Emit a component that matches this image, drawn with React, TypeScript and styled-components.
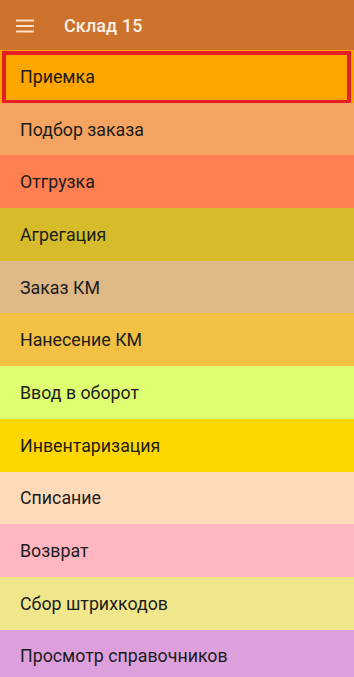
import React from "react";
import styled, { createGlobalStyle } from "styled-components";

const GlobalStyle = createGlobalStyle`
  html, body {
    margin: 0;
    padding: 0;
    background: #ffffff;
    font-family: Roboto, "Noto Sans", "Liberation Sans", sans-serif;
  }
`;

const menuItems = [
  { title: "Приемка", color: "#FFA500", active: true },
  { title: "Подбор заказа", color: "#F4A460" },
  { title: "Отгрузка", color: "#FF7F50" },
  { title: "Агрегация", color: "#D6BC2A" },
  { title: "Заказ КМ", color: "#DEB887" },
  { title: "Нанесение КМ", color: "#F2C043" },
  { title: "Ввод в оборот", color: "#DFFF72" },
  { title: "Инвентаризация", color: "#FFD700" },
  { title: "Списание", color: "#FFDAB9" },
  { title: "Возврат", color: "#FFB6C1" },
  { title: "Сбор штрихкодов", color: "#F0E68C" },
  { title: "Просмотр справочников", color: "#DDA0DD" },
];

function App() {
  return (
    <Screen>
      <GlobalStyle />
      <Toolbar>
        <MenuButton aria-label="menu">
          <svg width="18" height="14" viewBox="0 0 18 14">
            <rect x="0" y="0.5" width="18" height="2" rx="0.5" fill="currentColor" />
            <rect x="0" y="6" width="18" height="2" rx="0.5" fill="currentColor" />
            <rect x="0" y="11.5" width="18" height="2" rx="0.5" fill="currentColor" />
          </svg>
        </MenuButton>
        <Title>Склад 15</Title>
      </Toolbar>
      <MenuList>
        {menuItems.map((item) => (
          <MenuRow key={item.title} $bg={item.color} $active={item.active}>
            {item.title}
          </MenuRow>
        ))}
      </MenuList>
    </Screen>
  );
}

export default App;

const Screen = styled.div`
  width: 354px;
  height: 677px;
  overflow: hidden;
  display: flex;
  flex-direction: column;
`;

const Toolbar = styled.div`
  height: 50px;
  flex-shrink: 0;
  display: flex;
  align-items: center;
  background: #cc722c;
`;

const MenuButton = styled.div`
  width: 48px;
  padding-left: 16px;
  box-sizing: border-box;
  display: flex;
  align-items: center;
  color: rgba(255, 236, 214, 0.9);
  margin-top: 1px;
`;

const Title = styled.div`
  margin-left: 16px;
  font-size: 18px;
  font-weight: 500;
  color: #fbefe4;
  letter-spacing: 0.1px;
`;

const MenuList = styled.div`
  display: flex;
  flex-direction: column;
`;

const MenuRow = styled.div<{ $bg: string; $active?: boolean }>`
  position: relative;
  height: 52.7px;
  flex-shrink: 0;
  display: flex;
  align-items: center;
  padding-left: 20px;
  background: ${(p) => p.$bg};
  font-size: 17.8px;
  color: #1c1c1c;

  ${(p) =>
    p.$active &&
    `
    &::after {
      content: "";
      position: absolute;
      left: 2px;
      right: 3px;
      top: 1px;
      bottom: -1px;
      border: 4px solid #e41f26;
      box-sizing: border-box;
    }
  `}
`;
